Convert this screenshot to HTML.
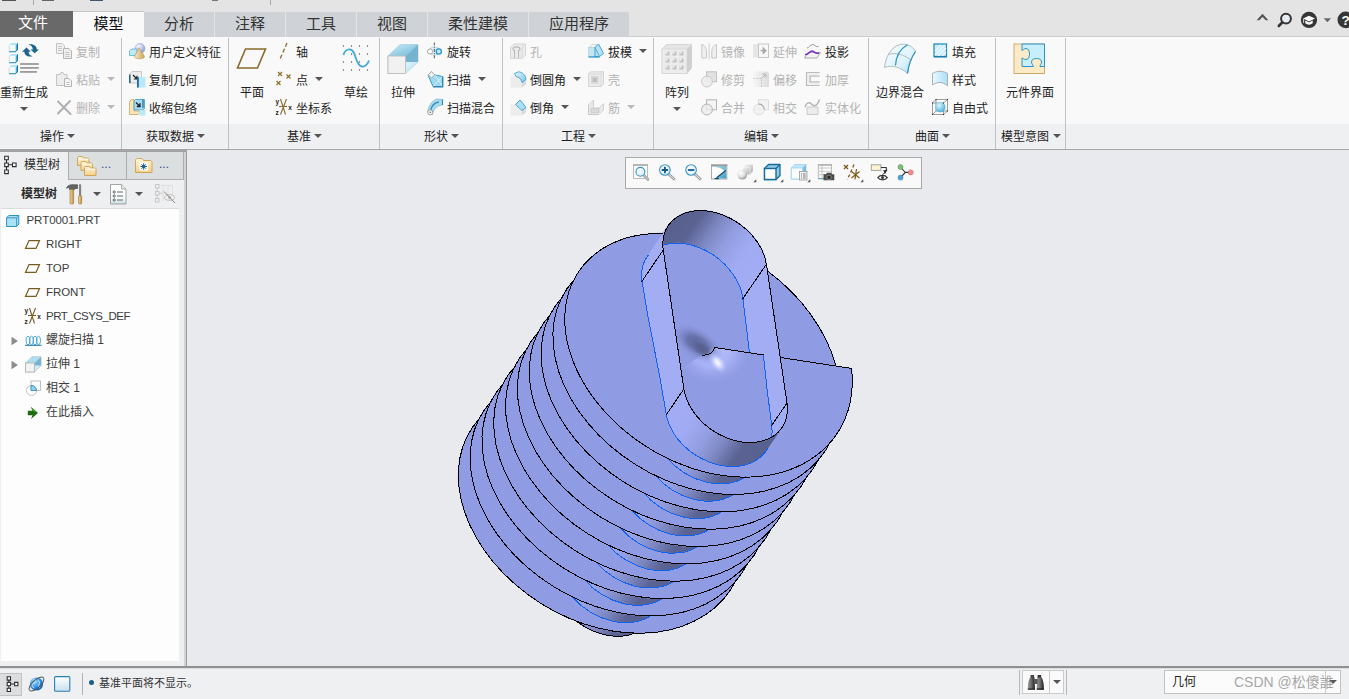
<!DOCTYPE html>
<html lang="zh-CN"><head><meta charset="utf-8"><title>Creo Parametric</title>
<style>
html,body{margin:0;padding:0}
body{width:1349px;height:699px;overflow:hidden;position:relative;background:#e9eaee;font-family:"Liberation Sans","Noto Sans CJK SC",sans-serif;font-size:12px;color:#1e1e1e}
.a{position:absolute}
.t{position:absolute;line-height:18px;white-space:nowrap;font-size:12px}
.d{color:#b3b3b3}
.ar{position:absolute;width:0;height:0;border-left:4px solid transparent;border-right:4px solid transparent;border-top:4px solid #555}
.ar.d{border-top-color:#b8b8b8}
.sep{position:absolute;top:38px;width:1px;height:111px;background:#bfc2c4}
.tab{position:absolute;top:12px;height:25px;background:#cfd3d7;font-size:15px;line-height:24px;text-align:center;color:#333}
svg{position:absolute;overflow:visible}
</style></head><body>

<!-- ===== top strip ===== -->
<div class="a" id="topbar" style="left:0;top:0;width:1349px;height:37px;background:#e4e4e4"></div>
<div class="a" style="left:2px;top:0;width:14px;height:1px;background:#555"></div>
<div class="a" style="left:33px;top:0;width:1px;height:5px;background:#aaa"></div>
<div class="a" style="left:42px;top:0;width:12px;height:1px;background:#666"></div>
<div class="a" style="left:90px;top:0;width:13px;height:1px;background:#456"></div>
<div class="a" style="left:212px;top:0;width:6px;height:1px;background:#777"></div>
<div class="a" style="left:270px;top:0;width:1px;height:5px;background:#aaa"></div>

<div class="a" style="left:629px;top:36px;width:720px;height:1px;background:#c8ced2"></div>
<!-- ===== tabs ===== -->
<div class="tab" style="left:0;width:73px;top:11px;height:26px;background:#696969;color:#fff;line-height:23px;padding-right:7px;box-sizing:border-box">文件</div>
<div class="tab" style="left:73px;width:71px;top:11px;height:27px;background:#f9f9f9;color:#111;border-top:1px solid #c4c4c4;box-sizing:border-box">模型</div>
<div class="tab" style="left:144px;width:70px">分析</div>
<div class="tab" style="left:215px;width:70px">注释</div>
<div class="tab" style="left:286px;width:70px">工具</div>
<div class="tab" style="left:357px;width:70px">视图</div>
<div class="tab" style="left:428px;width:100px">柔性建模</div>
<div class="tab" style="left:529px;width:100px">应用程序</div>

<!-- ===== ribbon ===== -->
<div class="a" id="ribbon" style="left:0;top:37px;width:1349px;height:87px;background:#f9f9f9"></div>
<div class="a" id="grouprow" style="left:0;top:124px;width:1349px;height:24px;background:#eff0f2"></div>
<div class="a" style="left:0;top:148px;width:1349px;height:1px;background:#f4f4f4"></div>
<div class="a" style="left:0;top:149px;width:1349px;height:1px;background:#a3a3a3"></div>

<!-- separators -->
<div class="sep" style="left:121px"></div><div class="sep" style="left:228px"></div><div class="sep" style="left:379px"></div>
<div class="sep" style="left:502px"></div><div class="sep" style="left:653px"></div><div class="sep" style="left:868px"></div>
<div class="sep" style="left:995px"></div><div class="sep" style="left:1065px"></div>

<!-- group labels -->
<span class="t" style="left:40px;top:128px">操作</span><i class="ar" style="left:67px;top:134px"></i>
<span class="t" style="left:146px;top:128px">获取数据</span><i class="ar" style="left:197px;top:134px"></i>
<span class="t" style="left:287px;top:128px">基准</span><i class="ar" style="left:314px;top:134px"></i>
<span class="t" style="left:424px;top:128px">形状</span><i class="ar" style="left:451px;top:134px"></i>
<span class="t" style="left:561px;top:128px">工程</span><i class="ar" style="left:588px;top:134px"></i>
<span class="t" style="left:744px;top:128px">编辑</span><i class="ar" style="left:771px;top:134px"></i>
<span class="t" style="left:915px;top:128px">曲面</span><i class="ar" style="left:942px;top:134px"></i>
<span class="t" style="left:1001px;top:128px">模型意图</span><i class="ar" style="left:1053px;top:134px"></i>

<!-- ===== group 1: 操作 ===== -->
<svg style="left:8px;top:42px" width="34" height="34" viewBox="0 0 34 34">
 <defs><g id="cb"><path d="M1 3.3L3.2 1H10L7.7 3.3Z" fill="#b4e6f9"/><rect x="1" y="3.3" width="6.7" height="6.3" fill="#effbff"/><path d="M7.7 3.3L10 1V7.6L7.7 10Z" fill="#55a9d3"/><path d="M9.5 1.5V7.6L7.7 9.6" stroke="#1a76ab" stroke-width="1" fill="none"/><path d="M1 9.7H7.9" stroke="#2b8dc3" stroke-width="1.1"/><path d="M1.2 3.3V9.3" stroke="#cfc6c0" stroke-width=".6"/></g></defs>
 <use href="#cb"/><use href="#cb" y="11"/><use href="#cb" y="22"/>
 <g fill="#9b9b9b"><rect x="12" y="21.1" width="18.8" height="1.8"/><rect x="12" y="25" width="18.8" height="1.8"/><rect x="12" y="29" width="17" height="1.8"/></g>
 <g fill="#1c668e">
  <path d="M18.5 5.4L22.8 9.8H20.6C20.6 12 22.2 13.8 24.6 14.2C20 15.6 16.2 13 16.4 9.8H14Z"/>
  <path d="M26.7 11.2L22.4 7.4H24.8C24.8 5.2 23 3.2 20.4 2.6C25 1.2 29 4 28.8 7.4H31Z"/>
 </g>
</svg>
<span class="t" style="left:0;top:84px">重新生成</span><i class="ar" style="left:20px;top:107px"></i>

<svg style="left:56px;top:43px" width="17" height="17" viewBox="0 0 17 17"><g fill="#f1f1f1" stroke="#c3c3c3"><path d="M0.5 0.5H6L8.5 3V10.5H0.5Z"/><path d="M7.5 5.5H13L15.5 8V15.5H7.5Z" fill="#eee" stroke="#b5b5b5"/></g><path d="M2 3.5H6M2 5.5H6M2 7.5H6M9.5 9.5H13.5M9.5 11.5H13.5M9.5 13.5H13.5" stroke="#c6c6c6" fill="none"/></svg>
<span class="t d" style="left:76px;top:44px">复制</span>
<svg style="left:56px;top:71px" width="17" height="17" viewBox="0 0 17 17"><path d="M0.5 3.5H4L5 1.5H7L8 3.5H11V14.5H0.5Z" fill="#ececec" stroke="#c3c3c3"/><path d="M8.5 7.5H13L15.5 10V15.5H8.5Z" fill="#f3f3f3" stroke="#b5b5b5"/><path d="M10.5 11.5H13.5M10.5 13.5H13.5" stroke="#c0c0c0"/></svg>
<span class="t d" style="left:76px;top:72px">粘贴</span><i class="ar d" style="left:107px;top:77px"></i>
<svg style="left:57px;top:100px" width="15" height="15" viewBox="0 0 15 15"><path d="M1 1.5L13.5 14M13 1L1 13.5" stroke="#b0b0b0" stroke-width="2" fill="none" stroke-linecap="round"/></svg>
<span class="t d" style="left:76px;top:100px">删除</span><i class="ar d" style="left:107px;top:105px"></i>

<!-- ===== group 2: 获取数据 ===== -->
<svg style="left:129px;top:43px" width="17" height="17" viewBox="0 0 17 17">
 <defs><radialGradient id="gsph" cx="35%" cy="30%" r="70%"><stop offset="0" stop-color="#fff"/><stop offset="1" stop-color="#8c9be0"/></radialGradient>
 <linearGradient id="gcone" x1="0" x2="1"><stop offset="0" stop-color="#fbe9c2"/><stop offset="1" stop-color="#c9a45c"/></linearGradient></defs>
 <circle cx="11" cy="5.5" r="5" fill="url(#gsph)" stroke="#98a4df" stroke-width=".6"/>
 <path d="M0.5 8L2.5 6H8V12.5H0.5Z" fill="#bfe8f7" stroke="#58b0d6" stroke-width=".8"/>
 <path d="M10 4.5L15.5 13.5C15.5 16.5 5.5 16.5 5.5 13.5Z" fill="url(#gcone)" stroke="#b08f4f" stroke-width=".6"/>
</svg>
<span class="t" style="left:149px;top:44px">用户定义特征</span>
<svg style="left:129px;top:71px" width="17" height="17" viewBox="0 0 17 17">
 <path d="M0.5 3.5L3 0.5H12.5V9L10 12H0.5Z" fill="#ededed" stroke="#bdbdbd" stroke-width=".8"/>
 <rect x="0" y="3.5" width="1.6" height="8.5" fill="#2b6585"/>
 <path d="M4 4L8 8M8 4.8V8H4.8" stroke="#222" stroke-width="1.2" fill="none"/>
 <rect x="8.5" y="6" width="8" height="10.5" fill="#b9e8fa"/><rect x="8" y="6" width="1.8" height="10.5" fill="#1d6c96"/>
</svg>
<span class="t" style="left:149px;top:72px">复制几何</span>
<svg style="left:129px;top:99px" width="17" height="17" viewBox="0 0 17 17">
 <path d="M0.5 3L2.5 0.5H5V12H11V13.5L9 15.5H0.5Z" fill="#fbe6b8" stroke="#c9a55e" stroke-width=".8"/>
 <path d="M5 2L6.5 0.5H15.5V9.5L14 11H5Z" fill="#a7dcf2" stroke="#3e9bc6" stroke-width=".8"/>
 <path d="M7 3.5L11 7.5M11 4.3V7.5H7.8" stroke="#222" stroke-width="1.3" fill="none"/>
 <rect x="10.5" y="11" width="6" height="5.5" fill="#b9e8fa"/><path d="M14 0.5V9" stroke="#1d6c96" stroke-width="1.2"/>
</svg>
<span class="t" style="left:149px;top:100px">收缩包络</span>

<!-- ===== group 3: 基准 ===== -->
<svg style="left:234px;top:46px" width="36" height="26" viewBox="0 0 36 26"><path d="M11.5 3H31.5L23.5 22H3.5Z" fill="none" stroke="#8a6a2a" stroke-width="1.6"/></svg>
<span class="t" style="left:240px;top:84px">平面</span>
<svg style="left:276px;top:42px" width="16" height="18" viewBox="0 0 16 18"><path d="M11 1L4 17" stroke="#8a6a2a" stroke-width="1.3" stroke-dasharray="4 2.4" fill="none"/></svg>
<span class="t" style="left:296px;top:44px">轴</span>
<svg style="left:275px;top:71px" width="18" height="16" viewBox="0 0 18 16"><path d="M3 1L7 5M7 1L3 5M11.5 3.5L15.5 7.5M15.5 3.5L11.5 7.5M1.5 10L5.5 14M5.5 10L1.5 14" stroke="#8a6a2a" stroke-width="1.1" fill="none"/></svg>
<span class="t" style="left:296px;top:72px">点</span><i class="ar" style="left:315px;top:77px"></i>
<svg style="left:275px;top:98px" width="18" height="18" viewBox="0 0 18 18"><path d="M5.5 1L10.5 16.5M11.5 1L5.5 16.5M4 8.5H12" stroke="#8a6a2a" stroke-width="1.1" fill="none"/>
 <text x="0.5" y="6" font-size="6.5" font-family="Liberation Sans,sans-serif" fill="#222" font-weight="bold">y</text><text x="0.5" y="17" font-size="6.5" font-family="Liberation Sans,sans-serif" fill="#222" font-weight="bold">z</text><text x="13.3" y="11.5" font-size="6.5" font-family="Liberation Sans,sans-serif" fill="#222" font-weight="bold">x</text></svg>
<span class="t" style="left:296px;top:100px">坐标系</span>
<svg style="left:342px;top:44px" width="29" height="29" viewBox="0 0 29 29">
 <g fill="#555"><circle cx="1.5" cy="2" r=".7"/><circle cx="9.5" cy="2" r=".7"/><circle cx="17.5" cy="2" r=".7"/><circle cx="25.5" cy="2" r=".7"/>
 <circle cx="9.5" cy="10" r=".7"/><circle cx="17.5" cy="10" r=".7"/><circle cx="25.5" cy="10" r=".7"/>
 <circle cx="1.5" cy="18" r=".7"/><circle cx="9.5" cy="18" r=".7"/><circle cx="17.5" cy="18" r=".7"/>
 <circle cx="1.5" cy="26" r=".7"/><circle cx="9.5" cy="26" r=".7"/><circle cx="17.5" cy="26" r=".7"/><circle cx="25.5" cy="26" r=".7"/></g>
 <path d="M1.5 11C3 5 9 3 12 9C14 13 15 22 20 22.5C24 23 26 19 27 16.5" fill="none" stroke="#3fa9d8" stroke-width="1.8"/>
</svg>
<span class="t" style="left:344px;top:84px">草绘</span>

<!-- ===== group 4: 形状 ===== -->
<svg style="left:387px;top:43px" width="32" height="32" viewBox="0 0 32 32">
 <defs><linearGradient id="gx1" x1="0" y1="0" x2="1" y2="1"><stop offset="0" stop-color="#c9eefb"/><stop offset="1" stop-color="#6fb6d6"/></linearGradient>
 <linearGradient id="gx2" x1="0" y1="0" x2="1" y2="1"><stop offset="0" stop-color="#e3f6fd"/><stop offset="1" stop-color="#a5dcf2"/></linearGradient></defs>
 <path d="M1 13L13 1.5H31V19L18.5 30.5H1Z" fill="url(#gx2)" stroke="#b9c6cc" stroke-width=".8"/>
 <path d="M1 13L13 1.5H31L18.5 13Z" fill="url(#gx1)"/>
 <path d="M18.5 13L31 1.5V19H18.5Z" fill="#76b3d0"/>
 <path d="M18.5 19H31L18.5 30.5Z" fill="url(#gx2)"/>
 <rect x="1" y="13" width="17.5" height="17.5" fill="#f1f1f1" stroke="#bdbdbd" stroke-width=".9"/>
</svg>
<span class="t" style="left:391px;top:84px">拉伸</span>
<svg style="left:426px;top:42px" width="18" height="18" viewBox="0 0 18 18">
 <path d="M4 6.5C6 4.5 11 4.5 13 6.5V12C11 13.5 6 13.5 4 12Z" fill="#d5eef9" stroke="#aac4d0" stroke-width=".6"/>
 <circle cx="4" cy="9.5" r="2.6" fill="#fff" stroke="#aaa" stroke-width="1"/>
 <circle cx="12.8" cy="9.5" r="2.6" fill="#bfe8f8" stroke="#2d94c4" stroke-width="1.3"/>
 <path d="M8.3 0.5V17" stroke="#555" stroke-width="1" stroke-dasharray="3 1.2 1 1.2" fill="none"/>
</svg>
<span class="t" style="left:447px;top:44px">旋转</span>
<svg style="left:427px;top:71px" width="17" height="17" viewBox="0 0 17 17">
 <path d="M1 4L4.5 0.8L8 4L15.5 5.5V15.5H6Z" fill="#9fd8ef" stroke="#3a9bc7" stroke-width="1"/>
 <path d="M8 4L15.5 15.5M6 15.5L15.5 5.5" stroke="#d8f2fc" stroke-width=".9" fill="none"/>
 <path d="M1 4L4.5 0.8L8 4L4.5 6.5Z" fill="#f4f4f4" stroke="#aaa" stroke-width=".8"/>
 <path d="M6 15.8H15.8V5.5" stroke="#2583b3" stroke-width="1.2" fill="none"/>
</svg>
<span class="t" style="left:447px;top:72px">扫描</span><i class="ar" style="left:478px;top:77px"></i>
<svg style="left:427px;top:98px" width="17" height="18" viewBox="0 0 17 18">
 <path d="M0.8 14C1.5 7 6 2 10 1L15.5 1.5V7C10 7.5 6.5 10.5 5.5 16.5Z" fill="#a9dcf1" stroke="#7fb3cb" stroke-width=".7"/>
 <path d="M3.5 13C4.5 8 8 4.5 12 4" stroke="#2e8dbb" stroke-width="1.3" fill="none"/>
 <path d="M15.5 1.5V7" stroke="#2e8dbb" stroke-width="1.2"/>
 <circle cx="3.2" cy="14.3" r="2.6" fill="#f6f6f6" stroke="#999" stroke-width=".9"/><circle cx="3.2" cy="14.3" r=".7" fill="#444"/>
</svg>
<span class="t" style="left:447px;top:100px">扫描混合</span>

<!-- ===== group 5: 工程 ===== -->
<svg style="left:510px;top:43px" width="17" height="17" viewBox="0 0 17 17">
 <path d="M0.5 4.5L4 1H15.5V12L12 15.5H0.5Z" fill="#ececec" stroke="#cfcfcf" stroke-width=".8"/>
 <path d="M12 4.5V15.5M12 4.5L15.5 1" stroke="#d2d2d2" stroke-width=".8" fill="none"/>
 <path d="M3 6.5C3 3 10 3 10 6.5M4.5 7V15M8.5 7V15M3 6.5L4.5 8M10 6.5L8.5 8" stroke="#b9b9b9" stroke-width="1.1" fill="none"/>
</svg>
<span class="t d" style="left:530px;top:44px">孔</span>
<svg style="left:510px;top:71px" width="17" height="17" viewBox="0 0 17 17">
 <defs><linearGradient id="gfl" x1="0" y1="0" x2="1" y2="1"><stop offset="0" stop-color="#e8f8fe"/><stop offset="1" stop-color="#79c6e8"/></linearGradient></defs>
 <path d="M0.5 5.5H6C9 6 11.5 8 12 11.5V16.5H0.5Z" fill="#ececec"/>
 <path d="M12 11.5L16 8.5V13L12 16.5Z" fill="#d9d9d9"/>
 <path d="M4.5 2.5L8.5 0.8C12.5 1.2 15.5 4 16 8.5L12 11.5C11.5 8 9 6 6 5.5Z" fill="url(#gfl)" stroke="#3e9fcd" stroke-width=".9"/>
</svg>
<span class="t" style="left:530px;top:72px">倒圆角</span><i class="ar" style="left:573px;top:77px"></i>
<svg style="left:510px;top:99px" width="17" height="17" viewBox="0 0 17 17">
 <path d="M0.5 5.5H5.5L12 11.5V16.5H0.5Z" fill="#ececec"/>
 <path d="M12 11.5L16 8.5V13L12 16.5Z" fill="#d9d9d9"/>
 <path d="M5.5 5.5L10 1L16 8.5L12 11.5Z" fill="#aadff5" stroke="#3e9fcd" stroke-width=".9"/>
</svg>
<span class="t" style="left:530px;top:100px">倒角</span><i class="ar" style="left:561px;top:105px"></i>
<svg style="left:588px;top:43px" width="17" height="17" viewBox="0 0 17 17">
 <path d="M0.5 4.5L4 1.5H9L7 4.5Z" fill="#f4f4f4" stroke="#c4c4c4" stroke-width=".6"/>
 <path d="M0.5 4.5H7V13.5H0.5Z" fill="#c4e4f1" stroke="#a5cfe0" stroke-width=".6"/>
 <path d="M7 4.5L10.5 1L15.5 10.5L11.5 13.5H7Z" fill="#b5e3f6" stroke="#3d9dca" stroke-width=".9"/>
 <path d="M7 4.5L11.5 13.5" stroke="#3d9dca" stroke-width=".8"/>
 <path d="M0.5 14H11.5" stroke="#2f97c9" stroke-width="1.3"/>
</svg>
<span class="t" style="left:608px;top:44px">拔模</span><i class="ar" style="left:639px;top:49px"></i>
<svg style="left:588px;top:71px" width="17" height="17" viewBox="0 0 17 17">
 <path d="M0.5 3L2.5 0.8H15.5V13L13 15.5H0.5Z" fill="#ebebeb" stroke="#cdcdcd" stroke-width=".8"/>
 <path d="M13 3V15.5M0.5 3H13L15.5 0.8" stroke="#d2d2d2" stroke-width=".7" fill="none"/>
 <rect x="3" y="5" width="7.5" height="7.5" fill="#d6d6d6"/><rect x="4.8" y="6.8" width="4" height="4" fill="#bdbdbd"/>
</svg>
<span class="t d" style="left:608px;top:72px">壳</span>
<svg style="left:588px;top:99px" width="17" height="17" viewBox="0 0 17 17">
 <path d="M0.5 6L5.5 1V9H11L15.5 4.5V11L11 15.5H0.5Z" fill="#e9e9e9" stroke="#c9c9c9" stroke-width=".8"/>
 <path d="M3 9.5H11V13.5H3Z" fill="#dadada" stroke="#c0c0c0" stroke-width=".6"/>
 <path d="M0.5 6V15.5H11" stroke="#bbb" stroke-width=".8" stroke-dasharray="1 1" fill="none"/>
</svg>
<span class="t d" style="left:608px;top:100px">筋</span><i class="ar d" style="left:627px;top:105px"></i>

<!-- ===== group 6: 编辑 ===== -->
<svg style="left:661px;top:43px" width="32" height="32" viewBox="0 0 32 32">
 <path d="M1 6L5.5 1.5H30.5V25L26 30.5H1Z" fill="#e4e4e4" stroke="#cfcfcf" stroke-width=".8"/>
 <path d="M26 6L30.5 1.5V25L26 30.5Z" fill="#cfcfcf"/>
 <rect x="1" y="6" width="25" height="24.5" fill="#ececec" stroke="#d2d2d2" stroke-width=".6"/>
 <g fill="#c2c2c2"><rect x="4.5" y="8.5" width="4" height="4"/><rect x="11.5" y="8.5" width="4" height="4"/><rect x="18.5" y="8.5" width="4" height="4"/>
 <rect x="4.5" y="15.5" width="4" height="4"/><rect x="11.5" y="15.5" width="4" height="4"/><rect x="18.5" y="15.5" width="4" height="4"/>
 <rect x="4.5" y="22.5" width="4" height="4"/><rect x="11.5" y="22.5" width="4" height="4"/><rect x="18.5" y="22.5" width="4" height="4"/></g>
 <g fill="#f5f5f5"><rect x="4.5" y="8.5" width="2" height="2"/><rect x="11.5" y="8.5" width="2" height="2"/><rect x="18.5" y="8.5" width="2" height="2"/>
 <rect x="4.5" y="15.5" width="2" height="2"/><rect x="11.5" y="15.5" width="2" height="2"/><rect x="18.5" y="15.5" width="2" height="2"/>
 <rect x="4.5" y="22.5" width="2" height="2"/><rect x="11.5" y="22.5" width="2" height="2"/><rect x="18.5" y="22.5" width="2" height="2"/></g>
</svg>
<span class="t" style="left:665px;top:84px">阵列</span><i class="ar" style="left:673px;top:107px"></i>

<svg style="left:701px;top:43px" width="17" height="17" viewBox="0 0 17 17">
 <path d="M0.8 1.5C4.5 2.5 5.5 6 5.5 8.5V15H0.8Z" fill="#efefef" stroke="#c2c2c2" stroke-width=".9"/>
 <path d="M15.5 1.5C11.8 2.5 10.8 6 10.8 8.5V15H15.5Z" fill="#efefef" stroke="#c2c2c2" stroke-width=".9"/>
 <path d="M8.1 0.5V16.5" stroke="#c8c8c8" stroke-width=".9"/>
</svg>
<span class="t d" style="left:721px;top:44px">镜像</span>
<svg style="left:701px;top:71px" width="17" height="17" viewBox="0 0 17 17">
 <rect x="5.5" y="0.8" width="10" height="10" fill="#e2e2e2" stroke="#bdbdbd" stroke-width=".9"/>
 <circle cx="6" cy="10.5" r="5.4" fill="#ededed" fill-opacity=".85" stroke="#c3c3c3" stroke-width=".9"/>
</svg>
<span class="t d" style="left:721px;top:72px">修剪</span>
<svg style="left:701px;top:99px" width="17" height="17" viewBox="0 0 17 17">
 <rect x="5.5" y="0.8" width="10" height="10" fill="#f4f4f4" stroke="#b5b5b5" stroke-width="1"/>
 <circle cx="6" cy="10.5" r="5.4" fill="#ececec" fill-opacity=".8" stroke="#b5b5b5" stroke-width="1"/>
</svg>
<span class="t d" style="left:721px;top:100px">合并</span>

<svg style="left:753px;top:43px" width="17" height="17" viewBox="0 0 17 17">
 <rect x="0" y="1" width="5.5" height="13.5" fill="#e6e6e6"/>
 <rect x="5.5" y="1" width="10" height="13.5" fill="#f8f8f8" stroke="#c0c0c0" stroke-width=".9"/>
 <path d="M7.5 7.7H12M10.2 5L13 7.7L10.2 10.4Z" stroke="#a9a9a9" stroke-width="1.2" fill="#a9a9a9"/>
</svg>
<span class="t d" style="left:773px;top:44px">延伸</span>
<svg style="left:753px;top:71px" width="17" height="17" viewBox="0 0 17 17">
 <defs><linearGradient id="gof" x1="0" x2="1"><stop offset="0" stop-color="#f7f7f7"/><stop offset="1" stop-color="#dcdcdc"/></linearGradient></defs>
 <path d="M0 0.5H13C15 0.5 16 1.5 16 3.5V16H0Z" fill="url(#gof)"/>
 <path d="M0.5 7.5H8.5V16" stroke="#bdbdbd" stroke-width=".9" stroke-dasharray="1.5 1.5" fill="none"/>
 <path d="M8.5 7.5L12.5 3.5M9.5 3.2H12.8V6.5" stroke="#b4b4b4" stroke-width="1" fill="none"/>
</svg>
<span class="t d" style="left:773px;top:72px">偏移</span>
<svg style="left:753px;top:99px" width="17" height="17" viewBox="0 0 17 17">
 <rect x="5.5" y="0.8" width="10" height="10" fill="#f3f3f3" stroke="#d6d6d6" stroke-width=".8"/>
 <circle cx="6" cy="10.5" r="5.4" fill="#f0f0f0" fill-opacity=".8" stroke="#dadada" stroke-width=".8"/>
 <path d="M5.5 5.2C8.5 4.8 11 7 11.3 10.5" stroke="#a8a8a8" stroke-width="1.2" fill="none"/>
</svg>
<span class="t d" style="left:773px;top:100px">相交</span>

<svg style="left:804px;top:43px" width="18" height="17" viewBox="0 0 18 17">
 <path d="M3 5C5 5 6 1.5 8.5 1.5C11 1.5 11.5 4.5 14.5 3.5" stroke="#999" stroke-width="1" fill="none"/>
 <path d="M4 9.5H16.5L13 15H0.5Z" fill="#f2f2f2" stroke="#9a9a9a" stroke-width=".8"/>
 <path d="M1 11.5C3.5 12.5 5.5 8 8 8C10.5 8 11 11.5 15 10" stroke="#7b2fbe" stroke-width="1.5" fill="none"/>
</svg>
<span class="t" style="left:825px;top:44px">投影</span>
<svg style="left:805px;top:71px" width="16" height="17" viewBox="0 0 16 17">
 <path d="M14.5 1.5H1.5V14.5H14.5M14.5 5H5V11H14.5" fill="none" stroke="#bcbcbc" stroke-width="1.1"/>
 <path d="M14.5 1.5H1.5V14.5H14.5V11H5V5H14.5Z" fill="#efefef"/>
 <path d="M14.5 1.5H1.5V14.5H14.5M14.5 5H5V11H14.5" fill="none" stroke="#bcbcbc" stroke-width="1.1"/>
</svg>
<span class="t d" style="left:825px;top:72px">加厚</span>
<svg style="left:804px;top:98px" width="18" height="18" viewBox="0 0 18 18">
 <path d="M3 9H14V16.5H3Z" fill="#ececec" stroke="#c6c6c6" stroke-width=".9"/>
 <path d="M1 9C2 5 5 3.5 7.5 6C9.5 8.5 13 9 15.5 1.5" stroke="#b3b3b3" stroke-width="1.5" fill="none"/>
</svg>
<span class="t d" style="left:825px;top:100px">实体化</span>

<!-- ===== group 7: 曲面 ===== -->
<svg style="left:883px;top:43px" width="34" height="32" viewBox="0 0 34 32">
 <defs><linearGradient id="gbb" x1="0" y1="0" x2="1" y2="1"><stop offset="0" stop-color="#f4fcff"/><stop offset=".6" stop-color="#dff4fc"/><stop offset="1" stop-color="#9fdaf1"/></linearGradient></defs>
 <path d="M1.5 24.5C2.5 14 8 4 17 1.5C23 0.5 29 2 32.5 8.5C28 15 25.5 22 24.5 30.5C18 24.5 9 21.5 1.5 24.5Z" fill="url(#gbb)" stroke="#a9b6bc" stroke-width=".9"/>
 <path d="M5 11.5C13 9 22 12 28.5 17.5" stroke="#a9b6bc" stroke-width=".9" fill="none"/>
 <path d="M12.5 22.5C13 13 17 6 24.5 1.8" stroke="#2d8fbd" stroke-width="1.2" fill="none"/>
 <path d="M32.5 8.5C28 15 25.5 22 24.5 30.5" stroke="#2d8fbd" stroke-width="1.2" fill="none"/>
</svg>
<span class="t" style="left:876px;top:84px">边界混合</span>
<svg style="left:933px;top:43px" width="15" height="15" viewBox="0 0 15 15">
 <rect x="1" y="1" width="12.5" height="12.5" fill="#c5ecfa" stroke="#2a8cbd" stroke-width="1.3"/>
 <path d="M2 8L8 2M2 12L12 2M5 13L13 5M9 13L13 9" stroke="#eefaff" stroke-width="1.2"/>
 <path d="M1 13.8H13.8" stroke="#1d7db0" stroke-width="1.4"/>
</svg>
<span class="t" style="left:952px;top:44px">填充</span>
<svg style="left:931px;top:70px" width="18" height="18" viewBox="0 0 18 18">
 <defs><linearGradient id="gst" x1="0" x2="1"><stop offset="0" stop-color="#e9f9ff"/><stop offset="1" stop-color="#a9e0f5"/></linearGradient></defs>
 <path d="M1.5 3.5C6 0.5 12 0.5 16.5 3.5V16C12 11.5 6 11.5 1.5 15Z" fill="url(#gst)" stroke="#a8a8a8" stroke-width=".9"/>
</svg>
<span class="t" style="left:952px;top:72px">样式</span>
<svg style="left:931px;top:98px" width="18" height="18" viewBox="0 0 18 18">
 <defs><radialGradient id="gbl" cx="40%" cy="35%" r="65%"><stop offset="0" stop-color="#dff5fd"/><stop offset="1" stop-color="#4fb0da"/></radialGradient></defs>
 <path d="M1.5 5L5 1.5H16.5V13L12.5 16.5H1.5Z M1.5 5H12.5V16.5M12.5 5L16.5 1.5M5 1.5V13H16.5M5 13L1.5 16.5" fill="none" stroke="#777" stroke-width=".7"/>
 <circle cx="9.3" cy="9" r="5.2" fill="url(#gbl)"/>
 <g fill="#222"><rect x="1" y="4.5" width="1" height="1"/><rect x="12" y="4.5" width="1" height="1"/><rect x="1" y="16" width="1" height="1"/><rect x="12" y="16" width="1" height="1"/><rect x="16" y="1" width="1" height="1"/><rect x="4.5" y="1" width="1" height="1"/><rect x="16" y="12.5" width="1" height="1"/></g>
</svg>
<span class="t" style="left:952px;top:100px">自由式</span>

<!-- ===== group 8: 模型意图 ===== -->
<svg style="left:1013px;top:43px" width="33" height="32" viewBox="0 0 33 32">
 <rect x="1" y="1" width="30.5" height="29.5" fill="#fdebc8" stroke="#c9a45f" stroke-width=".9"/>
 <path d="M9 1H31.5V23.5H27C27 22 28.5 21 28.5 19C28.5 16.5 26 15.5 23.5 15.5C21 15.5 18.5 16.5 18.5 19C18.5 21 20.5 22 20.5 23.5H9V15C10 15 11 16.5 13 16.5C15.5 16.5 16.5 13.5 16.5 11C16.5 8.5 15.5 5.5 13 5.5C11 5.5 10 7.5 9 7.5Z" fill="#c6eefc" stroke="#2e93c4" stroke-width="1"/>
</svg>
<span class="t" style="left:1006px;top:84px">元件界面</span>

<!-- top-right icons -->
<svg style="left:1255px;top:11px" width="94" height="18" viewBox="0 0 94 18">
 <path d="M1.6 9.2L7.5 2.8L13.4 9.2H10.6L7.5 6L4.4 9.2Z" fill="#555"/>
 <circle cx="31" cy="7.6" r="4.9" fill="#e6eef3" stroke="#333" stroke-width="2"/><path d="M27.3 11.3L23.8 15" stroke="#333" stroke-width="2.6" stroke-linecap="round"/>
 <circle cx="54" cy="8.9" r="8.1" fill="#363636"/><path d="M48 7.6L54 4.8L60 7.6L54 10.4Z" fill="#fff"/><path d="M50.3 9.6V12.3C52.5 14.2 55.5 14.2 57.7 12.3V9.6L54 11.4Z" fill="#fff"/><path d="M48.6 8V12" stroke="#fff" stroke-width=".8"/>
 <path d="M68.7 7.2H76.1L72.4 11.3Z" fill="#666"/>
 <circle cx="90.8" cy="8.9" r="8.3" fill="#363636"/><text x="86.6" y="14" font-size="13.5" font-weight="bold" fill="#fff" font-family="Liberation Sans,sans-serif">?</text>
</svg>


<!-- ===== left panel ===== -->
<div class="a" style="left:0;top:150px;width:184px;height:516px;background:#eeeff1"></div>
<div class="a" style="left:0;top:150px;width:187px;height:2px;background:#a3a3a3"></div>
<div class="a" style="left:1px;top:208px;width:178px;height:452px;background:#fdfdfd;border-top:1px solid #dcdcdc"></div>
<div class="a" style="left:184px;top:152px;width:2px;height:514px;background:#d3d4d6"></div>
<div class="a" style="left:186px;top:152px;width:1px;height:514px;background:#9c9c9c"></div>
<!-- tabs -->
<div class="a" style="left:68px;top:152px;width:116px;height:28px;background:#dcdfe0;border:1px solid #adadad;border-top:none;box-sizing:border-box"></div>
<div class="a" style="left:126px;top:152px;width:1px;height:27px;background:#adadad"></div>
<svg style="left:4px;top:155px" width="14" height="20" viewBox="0 0 14 20"><path d="M0.7 1.2h3.6v3.6h-3.6zM0.7 8h3.6v3.6h-3.6zM0.7 15h3.6v3.6h-3.6zM8.5 8h3.6v3.6h-3.6z" fill="#fff" stroke="#2e2e2e" stroke-width="1.1"/><path d="M2.5 4.8V8M2.5 11.6V15M4.3 9.8H8.5" fill="none" stroke="#2e2e2e" stroke-width="1.1"/></svg>
<span class="t" style="left:24px;top:156px;color:#2b2b2b">模型树</span>
<svg style="left:77px;top:156px" width="20" height="20" viewBox="0 0 20 20">
 <defs><linearGradient id="gfo" x1="0" y1="0" x2="0" y2="1"><stop offset="0" stop-color="#fff6de"/><stop offset="1" stop-color="#f3cf86"/></linearGradient>
 <g id="fo"><path d="M0.5 2C0.5 1 1 0.5 2 0.5H5.5L6.5 2H10.5C11.5 2 12 2.5 12 3.5V9.5H0.5Z" fill="url(#gfo)" stroke="#c9a052" stroke-width=".9"/><path d="M1 3.2H11.5" stroke="#fffaf0" stroke-width=".8"/></g></defs>
 <use href="#fo"/><use href="#fo" x="3.5" y="5"/><use href="#fo" x="7" y="10"/>
</svg>
<span class="t" style="left:101px;top:155px;color:#3a4a8a;letter-spacing:0">...</span>
<svg style="left:135px;top:158px" width="18" height="16" viewBox="0 0 18 16">
 <path d="M0.5 2.5C0.5 1.2 1.2 0.5 2.5 0.5H7L8.5 2.5H15C16.3 2.5 17 3.2 17 4.5V14.5H0.5Z" fill="url(#gfo)" stroke="#c9a052" stroke-width=".9"/>
 <rect x="4.5" y="4.5" width="8.5" height="8" fill="#fff"/>
 <path d="M8.7 5.2V11.8M5.4 8.5H12M6.4 6.2L11 10.8M11 6.2L6.4 10.8" stroke="#1c5d86" stroke-width="1"/><circle cx="8.7" cy="8.5" r="1.4" fill="#1c5d86"/>
</svg>
<span class="t" style="left:159px;top:155px;color:#3a4a8a">...</span>
<!-- toolbar -->
<span class="t" style="left:21px;top:185px;font-weight:bold;color:#2b2b2b">模型树</span>
<svg style="left:66px;top:184px" width="18" height="21" viewBox="0 0 18 21">
 <defs><linearGradient id="ghm" x1="0" x2="1"><stop offset="0" stop-color="#f0d9a0"/><stop offset="1" stop-color="#b98f42"/></linearGradient></defs>
 <path d="M0.8 3.5C2 1 5 0.3 8 0.8H11.5V4.5H8.5V5.5H3.5V3.5C2.5 3.2 1.5 3.6 0.8 4.5Z" fill="#666" stroke="#3a3a3a" stroke-width=".6"/>
 <rect x="4" y="5.5" width="3.6" height="14.5" rx="1" fill="url(#ghm)" stroke="#9a7433" stroke-width=".6"/>
 <rect x="13.3" y="0.8" width="1.6" height="11" fill="#8a8a8a" stroke="#555" stroke-width=".4"/>
 <rect x="12.5" y="11.5" width="3.2" height="8.5" rx="1" fill="url(#ghm)" stroke="#9a7433" stroke-width=".6"/>
</svg>
<i class="ar" style="left:93px;top:192px"></i>
<svg style="left:110px;top:184px" width="17" height="21" viewBox="0 0 17 21">
 <defs><linearGradient id="gdoc" x1="0" y1="0" x2="0" y2="1"><stop offset="0" stop-color="#fff"/><stop offset=".7" stop-color="#f4f8fa"/><stop offset="1" stop-color="#c7dde6"/></linearGradient></defs>
 <path d="M0.5 0.5H11.5L16 5V20H0.5Z" fill="url(#gdoc)" stroke="#9a9a9a" stroke-width=".9"/><path d="M11.5 0.5V5H16" fill="#e8e8e8" stroke="#9a9a9a" stroke-width=".8"/>
 <g fill="none" stroke="#555" stroke-width=".9"><circle cx="4.2" cy="8" r="1.1"/><circle cx="4.2" cy="12" r="1.1"/><circle cx="4.2" cy="16" r="1.1"/><path d="M7 8H13M7 12H13M7 16H13"/></g>
</svg>
<i class="ar" style="left:135px;top:192px"></i>
<svg style="left:155px;top:184px" width="21" height="21" viewBox="0 0 21 21">
 <g fill="none" stroke="#c4c4c4" stroke-width=".9"><rect x="0.5" y="0.5" width="3.5" height="3.5"/><rect x="0.5" y="7.5" width="3.5" height="3.5"/><rect x="0.5" y="14.5" width="3.5" height="3.5"/><path d="M2.2 4V7.5M2.2 11V14.5M4 9.2H8"/><path d="M8 1.5V17M13 1.5V10M17.5 1.5V10M6 1.5H18" stroke="#dcdcdc"/></g>
 <ellipse cx="14.5" cy="13.5" rx="5" ry="2.8" fill="#efefef" stroke="#b5b5b5" stroke-width=".9"/><circle cx="14.5" cy="13.5" r="1.4" fill="#b5b5b5"/>
 <path d="M9 7.5L20 19" stroke="#8a8a8a" stroke-width="1"/>
</svg>

<!-- tree rows -->
<style>.tr{position:absolute;line-height:18px;white-space:nowrap;font-size:12px;color:#3c3c3c;left:46px}.tr.en{font-size:11.5px;letter-spacing:-.05px}</style>
<svg style="left:6px;top:214px" width="14" height="14" viewBox="0 0 14 14"><path d="M0.6 3.8L2.8 1.5H12.8V10.2L10.6 12.5H0.6Z" fill="#a9e2f7" stroke="#2f8fc0" stroke-width="1"/><path d="M0.6 3.8H10.6V12.5M10.6 3.8L12.8 1.5" fill="none" stroke="#2f8fc0" stroke-width=".9"/></svg>
<span class="tr en" style="left:26.5px;top:211px">PRT0001.PRT</span>
<svg style="left:24px;top:239px" width="17" height="11" viewBox="0 0 17 11"><path d="M5 1.6H15.5L12 9.4H1.5Z" fill="none" stroke="#7a5c22" stroke-width="1.2"/></svg>
<span class="tr en" style="top:235px">RIGHT</span>
<svg style="left:24px;top:263px" width="17" height="11" viewBox="0 0 17 11"><path d="M5 1.6H15.5L12 9.4H1.5Z" fill="none" stroke="#7a5c22" stroke-width="1.2"/></svg>
<span class="tr en" style="top:259px">TOP</span>
<svg style="left:24px;top:287px" width="17" height="11" viewBox="0 0 17 11"><path d="M5 1.6H15.5L12 9.4H1.5Z" fill="none" stroke="#7a5c22" stroke-width="1.2"/></svg>
<span class="tr en" style="top:283px">FRONT</span>
<svg style="left:24px;top:307px" width="18" height="18" viewBox="0 0 18 18"><path d="M5.5 1L10.5 16.5M11.5 1L5.5 16.5M4 8.5H12" stroke="#7a5c22" stroke-width="1.1" fill="none"/>
 <text x="0.5" y="6" font-size="6.5" font-family="Liberation Sans,sans-serif" fill="#222" font-weight="bold">y</text><text x="0.5" y="17" font-size="6.5" font-family="Liberation Sans,sans-serif" fill="#222" font-weight="bold">z</text><text x="13.3" y="11.5" font-size="6.5" font-family="Liberation Sans,sans-serif" fill="#222" font-weight="bold">x</text></svg>
<span class="tr en" style="top:307px;letter-spacing:-.5px">PRT_CSYS_DEF</span>

<svg style="left:11px;top:336px" width="8" height="10" viewBox="0 0 8 10"><path d="M0.5 0.8L7 5L0.5 9.2Z" fill="#8c8c8c"/></svg>
<svg style="left:25px;top:335px" width="17" height="12" viewBox="0 0 17 12"><g fill="none" stroke="#3a9fd0" stroke-width=".9"><ellipse cx="3" cy="5.5" rx="2" ry="4.3"/><ellipse cx="6.5" cy="5.5" rx="2" ry="4.3"/><ellipse cx="10" cy="5.5" rx="2" ry="4.3"/><ellipse cx="13.5" cy="5.5" rx="2" ry="4.3"/></g><path d="M0 10.3H16.5" stroke="#1f6f9c" stroke-width="1"/></svg>
<span class="tr" style="top:331px">螺旋扫描 1</span>
<svg style="left:11px;top:360px" width="8" height="10" viewBox="0 0 8 10"><path d="M0.5 0.8L7 5L0.5 9.2Z" fill="#8c8c8c"/></svg>
<svg style="left:25px;top:356px" width="17" height="17" viewBox="0 0 17 17">
 <path d="M0.5 7L7 0.8H16V9.5L9.5 16H0.5Z" fill="#cfeefa" stroke="#a5b4ba" stroke-width=".7"/>
 <path d="M9.5 7L16 0.8V9.5H9.5Z" fill="#76b3d0"/><path d="M0.5 7L7 0.8H16L9.5 7Z" fill="#aedcf0"/>
 <rect x="0.5" y="7" width="9" height="9" fill="#f3f3f3" stroke="#b0b0b0" stroke-width=".8"/>
</svg>
<span class="tr" style="top:355px">拉伸 1</span>
<svg style="left:25px;top:380px" width="17" height="17" viewBox="0 0 17 17">
 <rect x="6" y="1" width="9.5" height="9.5" fill="#fcfcfc" stroke="#b9b9b9" stroke-width=".9"/>
 <circle cx="6.5" cy="10.5" r="5" fill="#fff" fill-opacity=".7" stroke="#bdbdbd" stroke-width=".9"/>
 <path d="M6 5.5C9 5.3 11.3 7.5 11.5 10.5H6Z" fill="#8fd3f0" stroke="#2d8fc0" stroke-width=".9"/>
</svg>
<span class="tr" style="top:379px">相交 1</span>
<svg style="left:27px;top:406px" width="12" height="14" viewBox="0 0 12 14"><path d="M0.8 4.8H5.5L4 1L11 7L4 13L5.5 9.2H0.8Z" fill="#1f6b12"/><path d="M5.5 4.8L4 1L11 7Z" fill="#3aa01f"/></svg>
<span class="tr" style="top:403px">在此插入</span>


<!-- ===== viewport ===== -->
<!--MODEL-START-->
<svg style="left:0;top:0" width="1349" height="699" viewBox="0 0 1349 699">
<defs>
<linearGradient id="gOut" gradientUnits="userSpaceOnUse" x1="704.2" y1="341.9" x2="797.2" y2="405.3"><stop offset="0.00" stop-color="#a3adf4"/><stop offset="0.30" stop-color="#a0abf3"/><stop offset="0.50" stop-color="#929de0"/><stop offset="0.65" stop-color="#7c87c1"/><stop offset="0.81" stop-color="#5b6393"/><stop offset="1.00" stop-color="#58608e"/></linearGradient>
<linearGradient id="gIn" gradientUnits="userSpaceOnUse" x1="625.5" y1="288.2" x2="718.5" y2="351.6"><stop offset="0.00" stop-color="#58608e"/><stop offset="0.19" stop-color="#5b6393"/><stop offset="0.35" stop-color="#7c87c1"/><stop offset="0.50" stop-color="#929de0"/><stop offset="0.70" stop-color="#a0abf3"/><stop offset="1.00" stop-color="#a3adf4"/></linearGradient>
<radialGradient id="gDark" cx="0" cy="0" r="1" gradientUnits="userSpaceOnUse" gradientTransform="translate(697.5 343.8) rotate(33) scale(30 16)"><stop offset="0" stop-color="#59629a" stop-opacity=".95"/><stop offset=".4" stop-color="#626ca3" stop-opacity=".85"/><stop offset="1" stop-color="#8f9be2" stop-opacity="0"/></radialGradient>
<radialGradient id="gDark2" cx="0" cy="0" r="1" gradientUnits="userSpaceOnUse" gradientTransform="translate(702 349) rotate(33) scale(11 6.5)"><stop offset="0" stop-color="#545d8e"/><stop offset=".5" stop-color="#58618f" stop-opacity=".85"/><stop offset="1" stop-color="#5d6799" stop-opacity="0"/></radialGradient>
<radialGradient id="gHi" cx="0" cy="0" r="1" gradientUnits="userSpaceOnUse" gradientTransform="translate(717.6 362.6) rotate(52) scale(12.5 7.5)"><stop offset="0" stop-color="#fff"/><stop offset=".35" stop-color="#dfe4ff" stop-opacity=".9"/><stop offset="1" stop-color="#aab4fa" stop-opacity="0"/></radialGradient>
<radialGradient id="gFan" cx="0" cy="0" r="1" gradientUnits="userSpaceOnUse" gradientTransform="translate(713 350) scale(38 34)"><stop offset="0" stop-color="#bcc5ff" stop-opacity="1"/><stop offset=".5" stop-color="#abb5f9" stop-opacity=".9"/><stop offset="1" stop-color="#98a3ea" stop-opacity="0"/></radialGradient>
<clipPath id="cDk"><path d="M660 320H713.4V347.3L707.8 353.6L702 355L660 357Z"/></clipPath>
<clipPath id="cFan"><path d="M713.5 347.5L772 356.3L765 405L688 405L676 372Z"/></clipPath>
</defs>
<path d="M717.2 212.8L711.2 211.8L710.8 211.2L708.2 211.2L707.8 210.8L693.2 210.8L692.8 211.2L690.2 211.2L682.2 213.8L674.8 218.2L668.8 224.2L662.8 233.2L656.2 233.2L655.8 233.8L644.2 234.2L643.8 234.8L640.8 234.8L640.2 235.2L632.8 236.2L626.8 238.2L625.2 238.2L615.8 241.8L608.2 245.2L607.2 246.2L602.2 248.8L593.2 255.2L583.8 264.8L578.8 271.2L573.8 280.2L569.8 284.8L565.2 291.2L562.2 297.2L556.2 304.2L551.8 311.2L550.2 314.8L542.2 324.8L538.2 332.2L536.2 334.2L529.8 343.2L526.8 349.2L519.8 357.8L514.8 366.8L510.8 371.2L505.2 379.2L503.2 383.8L496.2 392.2L492.8 397.8L491.2 401.2L484.2 409.8L479.2 418.8L473.8 425.2L466.2 437.8L460.8 453.2L460.2 457.8L459.2 460.8L459.2 464.2L458.8 464.8L458.2 480.2L458.8 480.8L459.2 490.2L459.8 490.8L460.2 496.2L460.8 496.8L460.8 498.8L461.2 499.2L462.2 504.8L468.2 521.8L473.8 533.2L474.8 534.2L474.8 535.2L475.8 536.2L479.8 543.8L489.2 557.2L500.8 570.8L501.2 570.8L509.2 579.2L520.8 589.2L534.2 599.2L552.2 610.2L564.2 616.2L565.2 616.2L571.2 619.2L574.8 620.2L585.2 627.2L592.2 630.8L593.2 630.8L595.8 632.2L600.2 633.8L601.8 633.8L606.2 635.2L608.8 635.2L609.2 635.8L622.2 636.2L622.8 635.8L628.8 635.2L634.2 633.2L652.2 632.8L652.8 632.2L656.8 632.2L657.2 631.8L660.2 631.8L660.8 631.2L663.2 631.2L663.8 630.8L670.8 629.8L685.2 625.2L691.2 622.2L692.2 622.2L701.8 617.2L714.2 608.2L724.8 597.8L730.8 589.8L734.8 582.2L740.2 575.8L747.8 563.2L753.2 556.8L759.8 545.8L761.8 543.8L767.8 535.2L770.2 530.2L776.8 522.2L782.2 512.8L789.8 503.2L794.8 494.2L799.2 489.2L806.8 476.8L810.8 472.2L812.8 468.8L814.2 467.2L818.8 459.2L820.8 457.2L826.8 448.8L829.2 443.8L835.8 435.8L840.8 427.8L844.2 420.8L848.8 408.2L848.8 406.8L850.2 402.2L850.8 397.2L851.2 396.8L851.8 387.2L852.2 386.8L851.8 368.8L848.8 367.8L839.2 366.8L835.8 365.8L833.2 356.8L832.2 355.2L831.8 352.8L828.2 345.2L828.2 344.2L822.2 332.2L816.2 322.2L810.8 314.2L805.8 308.2L804.8 306.2L791.8 291.8L778.2 279.2L767.2 270.8L765.8 259.8L763.2 252.2L758.8 243.8L753.2 236.2L748.8 231.2L744.8 227.8L735.2 220.8L726.8 216.2Z" fill="#8f9be2" stroke="#8f9be2" stroke-width=".6"/>
<g clip-path="url(#cFan)"><ellipse cx="713" cy="350" rx="38" ry="34" fill="url(#gFan)"/></g>
<ellipse cx="697.5" cy="343.8" rx="31" ry="31" fill="url(#gDark)"/><g clip-path="url(#cDk)"><ellipse cx="702" cy="349" rx="12" ry="12" fill="url(#gDark2)"/></g>
<ellipse cx="717.6" cy="362.6" rx="13" ry="13" fill="url(#gHi)"/>
<path d="M580.2 623.2L580.2 624.2L592.2 630.8L593.2 630.8L595.8 632.2L600.2 633.8L601.8 633.8L606.2 635.2L613.2 635.8L613.8 636.2L622.2 636.2L622.8 635.8L626.2 635.8L626.8 635.2L628.8 635.2L632.2 634.2L632.2 633.2L620.2 632.8L619.8 632.2L616.2 632.2L615.8 631.8L613.2 631.8L612.8 631.2L610.2 631.2L609.8 630.8L602.8 629.8ZM575.8 599.2L575.8 600.2L579.2 603.8L585.2 608.8L586.8 609.2L592.2 613.2L593.2 613.2L594.2 614.2L599.2 616.8L608.8 620.2L610.8 620.2L611.2 620.8L612.8 620.8L615.2 621.8L617.8 621.8L618.2 622.2L624.2 622.2L624.8 622.8L626.2 622.8L626.8 622.2L633.8 622.2L634.2 621.8L636.2 621.8L643.2 619.8L648.2 617.2L648.2 616.2L641.8 616.2L641.2 615.8L630.8 615.2L630.2 614.8L627.2 614.8L626.8 614.2L624.2 614.2L623.8 613.8L621.2 613.8L620.8 613.2L613.8 612.2L613.2 611.8L605.8 610.2L603.8 609.2L602.2 609.2L590.2 605.2L586.2 603.2L583.8 602.8L576.8 599.2ZM587.2 581.8L587.2 582.8L593.2 588.2L602.2 594.8L610.8 599.2L611.8 599.2L615.8 601.2L626.2 604.2L633.2 604.8L633.8 605.2L642.2 605.2L642.8 604.8L645.8 604.8L646.2 604.2L648.8 604.2L649.2 603.8L652.8 603.2L660.8 599.8L660.8 598.8L645.8 598.2L645.2 597.8L634.8 596.8L634.2 596.2L627.2 595.2L622.8 593.8L620.8 593.8L608.8 589.8L607.2 589.8L605.8 588.8L597.8 586.2L591.8 583.2ZM599.8 564.8L599.8 565.8L604.8 570.8L610.8 575.2L618.2 579.8L621.2 580.8L622.2 581.8L633.2 585.8L634.8 585.8L637.2 586.8L643.8 587.2L644.2 587.8L654.8 587.8L655.2 587.2L658.8 587.2L661.2 586.2L663.2 586.2L671.8 582.8L671.8 581.8L669.2 581.8L668.8 581.2L656.2 580.8L655.8 580.2L652.2 580.2L651.8 579.8L648.8 579.8L648.2 579.2L645.8 579.2L645.2 578.8L638.2 577.8L618.8 572.2L617.2 571.2L613.2 570.2L611.8 569.2L609.2 568.8L606.8 567.2L603.2 566.2L600.8 564.8ZM611.2 547.2L611.2 548.2L614.8 551.2L615.2 552.2L623.8 558.8L624.8 558.8L626.2 560.2L630.8 562.8L631.8 562.8L632.8 563.8L646.2 568.8L653.8 569.8L654.2 570.2L668.8 570.2L669.2 569.8L671.8 569.8L672.2 569.2L675.8 568.8L683.8 565.2L683.8 564.2L677.8 564.2L677.2 563.8L671.2 563.8L670.8 563.2L662.8 562.8L662.2 562.2L656.8 561.8L656.2 561.2L651.8 560.8L647.2 559.2L645.2 559.2L643.2 558.2L639.8 557.8L627.2 553.8L625.8 552.8L623.2 552.2L618.2 549.8L614.8 548.8L612.2 547.2ZM623.8 530.2L623.8 531.2L624.8 532.8L631.2 538.2L640.2 544.2L641.2 544.2L643.2 545.8L644.2 545.8L645.2 546.8L646.2 546.8L648.8 548.2L655.8 550.8L657.8 550.8L658.2 551.2L659.8 551.2L662.2 552.2L664.8 552.2L665.2 552.8L676.2 553.2L676.8 552.8L681.2 552.8L681.8 552.2L688.2 551.2L695.8 547.8L695.8 546.8L681.8 546.2L681.2 545.8L677.2 545.8L676.8 545.2L673.8 545.2L673.2 544.8L670.8 544.8L670.2 544.2L662.8 543.2L662.2 542.8L652.8 540.8L649.2 539.2L647.8 539.2L638.8 536.2L637.2 535.2L634.8 534.8L627.2 531.2ZM635.2 512.8L635.2 513.8L638.8 517.2L650.2 525.8L657.8 529.8L667.2 533.2L668.8 533.2L673.2 534.8L675.8 534.8L676.2 535.2L679.8 535.2L680.2 535.8L690.2 535.8L690.8 535.2L693.8 535.2L694.2 534.8L696.8 534.8L698.8 533.8L700.2 533.8L707.2 530.8L707.2 529.8L706.2 529.2L692.2 528.8L691.8 528.2L684.8 527.8L684.2 527.2L681.8 527.2L681.2 526.8L678.8 526.8L676.2 525.8L671.8 525.2L665.8 523.2L664.2 523.2L662.2 522.2L660.8 522.2L657.2 520.8L655.8 520.8L654.2 519.8L648.8 518.2L647.2 517.2L638.8 514.2L636.2 512.8ZM646.8 495.2L646.8 496.2L653.8 502.8L662.8 508.8L672.8 513.8L684.2 517.2L686.8 517.2L690.2 518.2L703.2 518.2L703.8 517.8L709.2 517.2L715.2 515.2L719.2 513.2L719.2 512.2L702.8 511.2L702.2 510.8L698.8 510.8L698.2 510.2L695.8 510.2L695.2 509.8L692.8 509.8L692.2 509.2L685.2 508.2L664.2 502.2L662.8 501.2L660.2 500.8L658.8 499.8L652.8 497.8L649.2 495.8ZM659.2 478.2L659.2 479.2L663.8 483.8L671.8 489.8L684.2 496.2L693.2 499.2L695.2 499.2L697.8 500.2L700.8 500.2L701.2 500.8L706.8 500.8L707.2 501.2L716.8 500.8L717.2 500.2L719.8 500.2L721.8 499.2L724.8 498.8L731.2 495.8L731.2 494.8L723.2 494.8L722.8 494.2L713.2 493.8L712.8 493.2L709.8 493.2L709.2 492.8L706.8 492.8L706.2 492.2L703.8 492.2L703.2 491.8L696.2 490.8L675.8 484.8L674.2 483.8L670.2 482.8L667.8 481.2L665.2 480.8L661.8 478.8ZM670.8 460.8L670.8 461.8L674.2 465.2L679.8 469.8L686.8 474.2L698.2 479.8L699.8 479.8L701.2 480.8L702.8 480.8L706.8 482.2L708.8 482.2L711.8 483.2L716.2 483.2L716.8 483.8L725.2 483.8L725.8 483.2L729.8 483.2L730.2 482.8L735.8 481.8L743.8 478.2L743.8 477.2L727.8 476.8L727.2 476.2L723.8 476.2L723.2 475.8L717.2 475.2L716.8 474.8L709.8 473.8L709.2 473.2L699.8 471.2L697.8 470.2L696.2 470.2L685.8 466.8L681.8 464.8L679.2 464.2L673.2 461.2ZM663.8 231.8L644.8 259.8L644.8 260.8L642.8 264.8L642.2 268.8L641.8 269.2L641.8 280.2L642.2 280.8L642.2 283.2L642.8 283.8L642.8 286.2L643.2 286.8L643.2 289.2L643.8 289.8L645.8 304.2L646.8 307.2L647.2 312.8L647.8 313.2L648.8 320.8L649.8 323.8L649.8 326.2L650.2 326.8L650.2 328.8L650.8 329.2L650.8 331.2L651.2 331.8L651.2 333.8L651.8 334.2L651.8 336.2L652.2 336.8L652.2 338.8L652.8 339.2L652.8 341.2L653.2 341.8L653.2 343.8L653.8 344.2L653.8 346.2L654.2 346.8L654.2 348.8L654.8 349.2L654.8 351.2L655.2 351.8L655.2 353.8L655.8 354.2L655.8 356.2L656.8 359.2L656.8 361.8L657.8 364.2L657.8 366.8L658.2 367.2L658.2 369.2L658.8 369.8L658.8 371.8L659.8 374.8L659.8 377.2L660.2 377.8L660.2 379.8L661.2 382.8L661.2 385.2L661.8 385.8L662.2 391.2L663.2 394.2L665.2 408.8L666.2 411.8L666.2 414.8L666.8 415.2L666.8 417.2L668.2 422.2L673.2 432.8L677.8 439.2L682.2 444.2L688.2 449.8L698.2 456.8L711.2 462.8L715.8 464.2L722.2 465.2L722.8 465.8L726.2 465.8L726.8 466.2L738.8 466.2L739.2 465.8L746.8 464.8L748.2 463.8L750.8 463.2L758.2 459.2L764.2 453.8L777.8 434.2L777.8 433.2L776.8 433.2L773.2 436.2L766.8 439.8L760.2 441.8L753.2 442.2L752.8 442.8L747.2 442.8L746.8 442.2L742.2 442.2L741.8 441.8L739.2 441.8L738.8 441.2L734.8 440.8L724.8 437.2L717.8 433.8L708.8 427.8L702.2 422.2L696.2 415.8L689.2 405.2L686.2 398.8L684.2 391.8L684.2 389.8L683.8 389.2L683.8 386.2L682.8 382.8L681.8 372.8L681.2 372.2L680.2 362.8L679.8 362.2L679.2 356.2L678.8 355.8L678.8 352.8L677.8 349.2L677.8 346.2L677.2 345.8L677.2 342.8L676.8 342.2L676.8 339.2L675.8 335.8L674.8 325.8L673.8 322.2L672.8 312.2L671.8 308.8L671.8 305.8L671.2 305.2L669.8 292.2L668.8 288.8L667.8 278.8L666.8 275.2L665.2 261.8L664.2 258.2L664.2 255.2L663.8 254.8L663.8 251.8L663.2 251.2L663.2 248.2L662.8 247.8L662.8 240.8L663.2 240.2L663.8 235.2L664.8 233.2L664.8 231.8Z" fill="url(#gOut)"/>
<path d="M682.2 213.8L674.8 218.2L668.8 224.2L668.8 225.8L665.8 230.8L664.2 235.2L663.8 240.2L663.2 240.8L663.2 244.8L669.8 243.8L670.2 243.2L673.2 243.2L673.8 242.8L674.8 243.2L676.2 242.8L680.2 242.8L680.8 243.2L687.8 243.8L688.2 244.2L693.8 245.2L700.8 248.2L701.8 248.2L711.2 253.2L720.2 259.8L731.2 271.2L737.8 281.2L741.2 289.8L741.2 291.2L742.8 295.8L742.8 297.8L743.2 298.2L744.2 309.2L744.8 309.8L745.8 320.8L746.2 321.2L746.2 325.2L746.8 325.8L746.8 328.8L747.2 329.2L747.8 337.2L748.2 337.8L749.2 351.2L749.8 352.2L751.2 352.8L760.8 353.8L763.8 354.8L763.8 359.2L764.2 359.8L765.2 373.8L765.8 374.2L766.2 382.2L766.8 382.8L766.8 387.2L767.2 387.8L767.2 391.2L767.8 391.8L767.8 395.2L768.2 395.8L768.2 399.2L768.8 399.8L768.8 403.2L769.2 403.8L769.2 407.8L769.8 408.2L770.8 419.2L771.2 419.8L771.8 426.8L772.2 427.2L772.2 434.2L771.8 435.8L773.2 435.8L783.2 426.2L784.8 423.2L787.2 414.8L787.2 402.8L786.8 402.2L786.8 399.2L785.8 395.8L785.8 392.8L785.2 392.2L785.2 389.2L784.2 385.8L783.8 379.2L782.8 375.8L782.8 372.8L782.2 372.2L782.2 369.2L781.8 368.8L781.8 365.8L780.8 362.2L779.8 352.2L778.8 348.8L777.8 338.8L776.8 335.2L776.2 328.8L775.2 325.2L774.8 318.8L773.8 315.2L773.8 312.2L773.2 311.8L773.2 308.8L772.8 308.2L772.8 305.2L771.8 301.8L770.8 291.8L769.8 288.2L768.8 278.2L767.8 274.8L767.2 268.2L766.8 267.8L765.8 259.8L763.2 252.2L756.8 240.8L748.8 231.2L738.2 222.8L726.8 216.2L717.2 212.8L711.2 211.8L710.8 211.2L708.2 211.2L707.8 210.8L693.2 210.8L692.8 211.2L690.2 211.2Z" fill="url(#gIn)"/>
<path d="M742.9 298.6L749.5 352.7M763.4 355.1L767.1 389.5L771.9 426.9L772.1 432.1L771.6 437.2M767.8 448.2L764.6 453.0L760.5 457.1L755.7 460.6L750.0 463.4L743.9 465.3L737.1 466.4L730.2 466.5L722.8 465.8L715.7 464.2L708.3 461.7L701.4 458.5L694.5 454.4L688.4 449.9L682.6 444.6L677.5 438.8L673.4 433.0L669.2 424.7L666.6 416.3L659.5 375.5L648.0 316.6L641.8 280.2L641.5 273.3L642.5 266.5L644.8 260.3L648.4 254.8M648.8 254.4L649.4 253.8M662.6 245.4L668.4 243.9L674.4 243.2L680.7 243.3L687.1 244.1L693.7 245.7L700.2 248.0L706.6 251.0L712.8 254.6L718.6 258.9L724.0 263.6L728.8 268.8L733.1 274.4L736.7 280.2L739.6 286.2L741.6 292.2L742.9 298.3M746.0 476.6L741.9 479.0L737.8 480.9L733.1 482.4L728.0 483.4L722.8 483.9L717.3 483.8L711.7 483.2L706.1 482.1L695.3 478.6L684.7 473.1L675.1 466.0L666.9 457.7M733.9 494.1L730.1 496.4L725.7 498.3L720.9 499.8L715.8 500.8L710.6 501.2L705.1 501.1L699.5 500.5L693.9 499.4L683.1 495.8L672.5 490.2L662.9 483.1L654.8 474.7M721.8 511.6L718.0 513.9L713.5 515.8L709.1 517.2L704.0 518.1L693.6 518.5L688.1 517.9L682.4 516.8L671.7 513.3L661.0 507.8L651.7 501.0L643.5 492.7M709.7 529.1L705.9 531.4L701.4 533.3L696.9 534.6L691.8 535.5L681.4 535.8L675.9 535.2L670.2 534.1L659.5 530.5L648.9 524.9L639.6 518.1L631.4 509.7M698.4 546.1L694.3 548.6L690.2 550.4L685.4 551.9L680.3 552.8L670.0 553.2L664.4 552.6L658.8 551.5L648.0 548.0L637.4 542.5L627.7 535.4L619.5 527.1M686.3 563.7L682.5 565.9L678.0 567.9L673.6 569.2L668.5 570.2L658.1 570.5L652.6 570.0L646.9 568.9L636.2 565.3L625.5 559.8L616.2 553.0L608.0 544.7M674.5 581.0L670.7 583.3L666.2 585.2L661.4 586.6L656.3 587.6L645.9 587.9L640.4 587.3L634.7 586.1L624.0 582.5L613.4 577.0L604.1 570.1L595.9 561.8M663.2 598.0L659.4 600.3L655.0 602.3L650.2 603.8L645.2 604.8L639.9 605.3L634.5 605.2L628.9 604.7L623.3 603.6L612.5 600.0L601.9 594.5L592.2 587.5L584.0 579.1M651.1 615.5L647.0 618.0L642.8 619.8L638.1 621.3L633.0 622.2L622.6 622.6L617.1 622.0L611.4 620.9L600.7 617.4L590.0 611.9L580.7 605.1L572.5 596.8" fill="none" stroke="#0f63ee" stroke-width="1" shape-rendering="crispEdges"/>
<path d="M851.6 368.4L852.3 377.4L852.2 385.8L851.5 394.1L850.2 402.2L848.2 410.0L845.4 417.9L842.1 425.1L838.2 431.9L833.5 438.6L828.4 444.6L822.8 450.2L816.6 455.3L809.9 459.9L802.8 464.0L795.2 467.6L787.0 470.7L778.6 473.2L770.0 475.0L760.7 476.3L751.5 477.0L742.1 477.1L732.6 476.6L722.9 475.5L712.8 473.8L702.7 471.4L693.0 468.6L683.4 465.2L673.5 461.2L663.8 456.6L654.6 451.6L645.4 446.0L636.8 440.2L627.9 433.4L619.7 426.5L612.0 419.2L604.5 411.4L597.6 403.1L591.4 395.0L585.6 386.3L580.7 377.8L576.2 368.8L572.5 359.7L569.6 351.0L567.2 341.9L565.7 333.3L564.9 324.4L564.8 315.7L565.5 307.3L566.9 299.1L569.0 291.4L571.9 283.9L575.5 276.7L579.8 270.0L584.7 263.7L590.4 258.0L596.6 252.8L603.4 248.1L610.8 244.1L618.7 240.6L626.7 237.9L635.4 235.8L644.5 234.3L653.9 233.4L663.2 233.3M767.3 270.8L779.8 280.8L791.1 291.4L801.6 302.7L810.9 314.7L819.1 327.1L826.1 340.0L831.8 353.1L836.1 366.3M831.2 440.5L825.4 450.8L818.0 460.4L809.3 469.0L799.7 476.3L788.7 482.6L777.0 487.4L764.1 491.2L750.9 493.5L737.1 494.5L722.6 494.1L707.7 492.4L693.1 489.4L678.5 485.1L663.8 479.5L649.4 472.6L635.6 464.6L622.4 455.6L610.0 445.7L598.5 434.9L587.9 423.1L578.7 411.1L570.6 398.3L564.0 385.1L558.9 372.2L555.3 358.9L553.4 346.2L552.9 333.4L554.1 321.0L557.0 309.3L561.4 298.3L567.1 288.5L574.5 279.4M819.2 458.2L813.2 468.7L805.9 478.0L797.4 486.4L787.5 493.8L776.8 499.9L764.8 504.9L752.3 508.5L738.7 510.9L724.9 511.8L710.3 511.4L695.8 509.7L680.9 506.6L666.3 502.3L651.6 496.6L637.2 489.8L623.3 481.8L610.2 472.7L597.8 462.7L586.4 451.9L575.8 440.2L566.6 428.1L558.6 415.3L552.1 402.5L547.0 389.2L543.4 375.9L541.5 363.2L541.1 350.4L542.4 338.1L545.1 326.6L549.6 315.7L555.5 305.6L562.9 296.5M807.4 475.6L801.5 485.8L794.1 495.4L785.3 503.9L775.7 511.2L764.6 517.4L752.9 522.3L740.4 525.9L726.8 528.2L713.0 529.2L698.4 528.8L683.9 527.0L669.0 523.9L654.4 519.6L639.7 514.0L625.3 507.1L611.5 499.1L598.3 490.0L585.9 480.1L574.2 469.0L563.9 457.5L554.8 445.4L546.7 432.6L540.3 419.8L535.1 406.5L531.6 393.6L529.6 380.5L529.3 368.0L530.5 355.7L533.3 344.0L537.7 333.0L543.7 322.9L550.8 314.0M795.7 492.7L789.6 503.2L782.4 512.5L774.0 520.9L764.1 528.4L753.3 534.5L741.4 539.5L728.9 543.1L715.3 545.5L701.1 546.5L686.9 546.1L672.4 544.4L657.5 541.4L642.9 537.1L628.2 531.4L613.8 524.6L599.9 516.6L586.7 507.6L574.4 497.6L562.9 486.9L552.3 475.1L542.9 462.7L535.0 450.2L528.6 437.4L523.4 424.1L519.8 410.9L517.8 398.1L517.4 385.6L518.6 373.3L521.4 361.5L525.8 350.6L531.5 340.7L538.8 331.6M783.3 511.1L777.3 521.3L770.0 530.6L761.4 538.9L751.4 546.3L740.3 552.4L728.6 557.2L716.0 560.7L702.4 563.0L688.6 563.9L674.0 563.4L659.1 561.5L644.5 558.4L629.9 554.0L615.2 548.3L600.9 541.4L587.1 533.3L573.9 524.2L561.6 514.2L550.2 503.3L539.7 491.5L530.6 479.4L522.8 466.9L516.4 454.1L511.3 440.8L507.9 427.9L505.9 414.8L505.6 402.3L506.9 390.0L509.7 378.6L514.1 367.6L520.0 357.5L527.4 348.5M771.8 527.7L765.9 537.9L758.5 547.5L750.0 555.9L740.1 563.3L729.0 569.5L717.3 574.4L704.8 577.9L691.2 580.3L677.0 581.2L662.8 580.8L648.3 579.1L633.4 575.9L618.4 571.5L604.1 566.0L589.7 559.1L575.9 551.1L562.7 542.0L550.3 532.0L538.9 521.2L528.3 509.4L519.0 497.0L511.2 484.5L504.7 471.7L499.6 458.4L496.1 445.5L494.1 432.4L493.8 419.6L495.0 407.6L497.8 395.9L502.3 384.9L508.0 375.1L515.4 366.0M760.2 544.5L754.2 555.1L747.0 564.4L738.6 572.8L728.7 580.3L718.0 586.4L706.1 591.5L693.2 595.2L679.7 597.6L665.9 598.5L651.3 598.2L636.5 596.4L621.5 593.3L606.9 589.0L592.2 583.3L577.8 576.4L564.0 568.4L550.8 559.3L538.2 549.1L526.8 538.3L516.2 526.4L506.9 514.0L499.1 501.5L492.7 488.7L487.6 475.4L484.2 462.5L482.3 449.4L482.0 436.6L483.3 424.3L486.2 412.7L490.6 402.0L496.6 392.0L504.0 382.9M748.3 562.2L742.2 572.7L735.0 582.0L726.5 590.4L716.6 597.8L705.6 604.1L693.9 609.0L681.4 612.6L667.8 614.9L653.7 615.9L639.4 615.5L624.6 613.7L609.6 610.6L595.1 606.3L580.3 600.6L566.0 593.7L552.1 585.7L539.0 576.6L526.6 566.7L515.2 555.9L504.6 544.1L495.5 532.0L487.5 519.1L481.0 506.3L475.9 493.1L472.4 480.1L470.5 467.0L470.1 454.3L471.4 442.0L474.3 430.3L478.8 419.3L484.7 409.3L492.0 400.4M736.7 579.0L730.7 589.6L723.5 599.0L714.9 607.6L705.3 614.9L694.6 621.0L682.7 626.1L670.2 629.8L656.6 632.2L642.9 633.2L628.3 632.9L613.5 631.2L598.5 628.1L583.6 623.8L569.2 618.3L554.8 611.4L540.9 603.5L527.7 594.4L515.0 584.2L503.6 573.5L493.0 561.7L483.8 549.6L475.8 536.8L469.3 524.0L464.2 510.7L460.7 497.8L458.7 484.7L458.3 471.9L459.5 459.6L462.4 447.9L466.7 437.2L472.6 427.1L480.0 418.0M714.9 347.5L713.2 350.9L710.4 353.5L707.0 354.9L702.1 355.2L701.8 355.5M714.9 347.5L763.8 355.0M780.3 357.5L851.5 368.4M766.4 264.2L787.3 405.0L787.4 411.1L786.6 416.9L784.9 422.3L782.3 427.3L778.1 432.3L773.0 436.4L766.9 439.5L759.8 441.6L752.0 442.6L744.1 442.3L736.0 440.9L727.5 438.2L719.3 434.5L711.8 429.9L704.8 424.5L698.4 418.1L693.2 411.5L688.8 404.1L685.7 396.5L683.9 389.2L663.0 248.1L662.8 242.0L663.7 236.2L665.4 230.8L668.0 225.8L672.4 220.6L677.6 216.6L684.0 213.4L690.9 211.4L698.7 210.5L706.6 210.9L714.7 212.3L723.1 215.0L731.4 218.9L738.9 223.5L746.0 229.2L752.1 235.3L757.3 242.0L761.5 249.1L764.6 256.6L766.3 263.9M635.1 633.1L628.6 635.2L621.2 636.2L613.4 636.1L605.3 634.9L597.2 632.6L589.2 629.3L581.6 624.9L574.8 620.0M766.4 264.2L742.7 298.9M787.0 403.0L771.4 425.8M683.9 388.9L666.0 415.2M663.2 250.1L641.5 281.9" fill="none" stroke="#000" stroke-width="1" shape-rendering="crispEdges"/>
</svg>
<!--MODEL-END-->
<div class="a" style="left:625px;top:157px;width:297px;height:32px;background:#f9f9f9;border:1px solid #a9a9a9;box-sizing:border-box"></div>
<svg style="left:625px;top:157px" width="297" height="32" viewBox="625 157 297 32">
 <defs>
  <linearGradient id="tlens" x1="0" y1="0" x2="1" y2="1"><stop offset="0" stop-color="#fff"/><stop offset="1" stop-color="#d4eefa"/></linearGradient>
  <radialGradient id="tsph" cx="35%" cy="30%" r="75%"><stop offset="0" stop-color="#fff"/><stop offset=".6" stop-color="#dcdcdc"/><stop offset="1" stop-color="#8e8e8e"/></radialGradient>
  <linearGradient id="tcub" x1="0" y1="0" x2="1" y2="1"><stop offset="0" stop-color="#fff"/><stop offset="1" stop-color="#a9a9a9"/></linearGradient>
  <linearGradient id="trep" x1="0" y1="0" x2="1" y2="1"><stop offset="0" stop-color="#b7e0ee"/><stop offset="1" stop-color="#3f9fc4"/></linearGradient>
 </defs>
 <!-- 1 zoom fit -->
 <rect x="633.5" y="165" width="14" height="13.5" fill="#fbfbfb" stroke="#bcbcbc" stroke-width="1"/><path d="M633 165H648" stroke="#a6a6a6" stroke-width="1.4"/>
 <path d="M643.5 175L648 179.5" stroke="#9b9b9b" stroke-width="2.6" stroke-linecap="round"/><path d="M643.5 175L648 179.5" stroke="#e4e4e4" stroke-width="1" stroke-linecap="round"/>
 <circle cx="640.4" cy="171.8" r="4.4" fill="url(#tlens)" stroke="#3b95c4" stroke-width="1.1"/>
 <!-- 2 zoom in -->
 <path d="M668.5 174L674 179" stroke="#9b9b9b" stroke-width="2.6" stroke-linecap="round"/><path d="M668.5 174L674 179" stroke="#e8e8e8" stroke-width="1" stroke-linecap="round"/>
 <circle cx="664.9" cy="170" r="5.3" fill="url(#tlens)" stroke="#3b95c4" stroke-width="1.1"/><path d="M661.7 170H668.1M664.9 166.8V173.2" stroke="#18598a" stroke-width="1.8"/>
 <!-- 3 zoom out -->
 <path d="M694.7 174L700.2 179" stroke="#9b9b9b" stroke-width="2.6" stroke-linecap="round"/><path d="M694.7 174L700.2 179" stroke="#e8e8e8" stroke-width="1" stroke-linecap="round"/>
 <circle cx="691.1" cy="170" r="5.3" fill="url(#tlens)" stroke="#3b95c4" stroke-width="1.1"/><path d="M687.9 170H694.3" stroke="#18598a" stroke-width="1.8"/>
 <!-- 4 repaint -->
 <rect x="711.5" y="165" width="15.3" height="14" fill="#fdfdfd" stroke="#a9a9a9" stroke-width="1"/>
 <path d="M712 167C719 166.5 724 169 726.3 173V178.5H717.5L726.3 170.5V166H712Z" fill="url(#trep)"/>
 <path d="M711 165.3H727.3" stroke="#9c9c9c" stroke-width="1.6"/>
 <path d="M725.8 170.5L716.5 178" stroke="#154e73" stroke-width="1.6"/><path d="M714.5 178.6H719" stroke="#154e73" stroke-width="1.2"/>
 <!-- 5 shading -->
 <path d="M743 167.5L746.5 164.5H753V171L750 174.5H743Z" fill="url(#tcub)"/><path d="M743 167.5H750V174.5" fill="none" stroke="#f4f4f4" stroke-width=".6"/>
 <circle cx="742.2" cy="174.8" r="4.8" fill="url(#tsph)"/>
 <path d="M756.3 179.3V182.3H753.3Z" fill="#555"/>
 <!-- 6 box -->
 <path d="M764.5 168.5L768.5 164.5H780V175.5L776 179.5H764.5Z" fill="#8fcbe2" stroke="#176b9b" stroke-width="1.3" stroke-linejoin="round"/>
 <rect x="764.5" y="168.5" width="11.5" height="11" fill="#fff" stroke="#176b9b" stroke-width="1.4"/><path d="M776 168.5L780 164.5" stroke="#176b9b" stroke-width="1.2"/>
 <path d="M783.3 179.3V182.3H780.3Z" fill="#555"/>
 <!-- 7 saved views -->
 <path d="M791.3 168L794.8 164.5H806V175.5L802.5 179H791.3Z" fill="#bfe6f7" stroke="#9ed3ec" stroke-width=".8"/>
 <path d="M802.5 168L806 164.5V175.5L802.5 179Z" fill="#7dbfe0"/>
 <rect x="791.3" y="168" width="11.2" height="11" fill="#fbfeff" stroke="#9ed3ec" stroke-width=".8"/>
 <rect x="799.5" y="171.5" width="7.5" height="8.5" fill="#f4f4f4" stroke="#9a9a9a" stroke-width=".8"/><path d="M801 174H802M803 174H805.7M801 176H802M803 176H805.7M801 178H802M803 178H805.7" stroke="#555" stroke-width=".8"/>
 <path d="M810.3 179.3V182.3H807.3Z" fill="#555"/>
 <!-- 8 table + camera -->
 <rect x="818.3" y="164.8" width="13.2" height="14" fill="#fcfcfc" stroke="#b4b4b4" stroke-width=".9"/>
 <path d="M818.3 168H831.5M818.3 171.3H831.5M818.3 174.6H831.5M822 164.8V178.8" stroke="#bdbdbd" stroke-width=".8"/><path d="M818 165H832" stroke="#a5a5a5" stroke-width="1.2"/><path d="M818.3 178.6H824" stroke="#5aa5cf" stroke-width="1"/>
 <path d="M823.5 174.3H826L827 172.8H831L832 174.3H834.3V180.3H823.5Z" fill="#4a4a4a"/><circle cx="829" cy="177.3" r="2.3" fill="#2b2b2b" stroke="#9a9a9a" stroke-width=".8"/>
 <!-- 9 datum display -->
 <g stroke="#7a5a1c" stroke-width="1.3" fill="none"><path d="M844 165L848 169M848 165L844 169"/><path d="M854 164.5L847.5 179.5" stroke-dasharray="3.2 2.2"/><path d="M856.5 169L855 179.5M851.5 171.5L859.5 178M859.5 171.5L851.5 178" stroke-width="1.2"/></g>
 <path d="M863.3 179.3V182.3H860.3Z" fill="#555"/>
 <!-- 10 annotation display -->
 <rect x="871.3" y="164.8" width="9.6" height="5.6" fill="#fdf3cf" stroke="#9c9c9c" stroke-width=".9"/>
 <path d="M881 167.5H886.5M886.3 167.5V171" stroke="#333" stroke-width="1.1" fill="none"/><path d="M883.2 170.2L887.6 169.8L885 174Z" fill="#333"/><path d="M886 172L882.5 174.5" stroke="#333" stroke-width="1"/>
 <path d="M877.8 177.6C880 174.6 885 174.6 887.3 177.6C885 180.6 880 180.6 877.8 177.6Z" fill="#fff" stroke="#333" stroke-width="1.1"/><circle cx="882.5" cy="177.6" r="1.5" fill="#333"/>
 <!-- 11 tree -->
 <path d="M900.5 167L905.3 172.4L900.5 177.5M905.3 172.4H910.5" stroke="#333" stroke-width="1.1" fill="none"/>
 <circle cx="900.5" cy="167" r="2.5" fill="#7fbf7a" stroke="#5a9a58" stroke-width=".6"/><circle cx="910.7" cy="172.4" r="2.5" fill="#ee8a8a" stroke="#c96a6a" stroke-width=".6"/><circle cx="900.5" cy="177.6" r="2.5" fill="#4fa3cf" stroke="#3a86b0" stroke-width=".6"/>
</svg>


<!-- ===== status bar ===== -->
<div class="a" style="left:0;top:666px;width:1349px;height:33px;background:#eff0f2"></div>
<div class="a" style="left:0;top:666px;width:1349px;height:2px;background:#909090"></div>
<div class="a" style="left:0;top:668px;width:1349px;height:1px;background:#dcdddf"></div>
<div class="a" style="left:-1px;top:673px;width:21px;height:21px;background:#dddee0;border:1px solid #c2c2c2;box-sizing:content-box"></div>
<svg style="left:6px;top:676px" width="14" height="17" viewBox="0 0 14 17"><path d="M1.2 0.8h3.3v3.3h-3.3zM1.2 6.4h3.3v3.3h-3.3zM1.2 12.2h3.3v3.3h-3.3zM8.6 6.4h3.3v3.3h-3.3z" fill="#fff" stroke="#2e2e2e" stroke-width="1.1"/><path d="M2.85 4.1V6.4M2.85 9.7V12.2M4.5 8H8.6" fill="none" stroke="#2e2e2e" stroke-width="1.1"/></svg>
<svg style="left:27px;top:675px" width="19" height="18" viewBox="0 0 19 18">
 <defs><radialGradient id="ggl" cx="35%" cy="30%" r="75%"><stop offset="0" stop-color="#9fdcff"/><stop offset=".6" stop-color="#2f8fe0"/><stop offset="1" stop-color="#1660b0"/></radialGradient></defs>
 <circle cx="9.5" cy="9" r="6.6" fill="url(#ggl)"/>
 <path d="M6 5C8 4 9 6 8 7.5C7 9 5.5 8 5 9.5C4.5 11 6 12 7 13M11 5.5C12.5 6 13 8 12 9.5C11 11 12 12.5 13 12" stroke="#bfe6ff" stroke-width="1.2" fill="none" opacity=".8"/>
 <ellipse cx="9.5" cy="9" rx="9.3" ry="4" fill="none" stroke="#555" stroke-width="1" transform="rotate(-42 9.5 9)"/>
 <path d="M4.2 13.6A6.6 6.6 0 0 0 15.5 6.2" fill="none" stroke="#2f8fe0" stroke-width="0"/>
</svg>
<svg style="left:54px;top:676px" width="17" height="16" viewBox="0 0 17 16"><defs><linearGradient id="gsq" x1="0" y1="0" x2="0" y2="1"><stop offset="0" stop-color="#fff"/><stop offset="1" stop-color="#c9dfec"/></linearGradient></defs><rect x="0.6" y="0.6" width="15.2" height="14.6" rx="1" fill="url(#gsq)" stroke="#2c7eae" stroke-width="1.1"/></svg>
<div class="a" style="left:82px;top:673px;width:1px;height:22px;background:#b3b3b3"></div>
<div class="a" style="left:89px;top:680px;width:5px;height:5px;border-radius:50%;background:#1b5e84"></div>
<span class="t" style="left:99px;top:674px;font-size:11px;color:#333">基准平面将不显示。</span>

<div class="a" style="left:1019px;top:670px;width:1px;height:25px;background:#b8b8b8"></div>
<div class="a" style="left:1066px;top:670px;width:1px;height:25px;background:#b8b8b8"></div>
<div class="a" style="left:1022px;top:670px;width:42px;height:24px;background:#fafafa;border:1px solid #cbcbcb;box-sizing:border-box"></div>
<div class="a" style="left:1049px;top:671px;width:1px;height:22px;background:#cbcbcb"></div>
<svg style="left:1027px;top:674px" width="18" height="17" viewBox="0 0 18 17">
 <defs><linearGradient id="gbn" x1="0" x2="1"><stop offset="0" stop-color="#9a9a9a"/><stop offset=".5" stop-color="#6a6a6a"/><stop offset="1" stop-color="#1c1c1c"/></linearGradient></defs>
 <rect x="3.5" y="1" width="3.6" height="3" fill="#444"/><rect x="10.6" y="1" width="3.6" height="3" fill="#333"/>
 <path d="M3 3.5H7.5L8 15.5H0.8C0.8 10 1.5 6 3 3.5Z" fill="url(#gbn)"/>
 <path d="M10.2 3.5H14.7C16.2 6 16.9 10 16.9 15.5H9.7Z" fill="url(#gbn)"/>
 <rect x="7.2" y="5" width="3.4" height="5" fill="#555"/>
 <rect x="0.8" y="14.5" width="7.2" height="1.2" fill="#222"/><rect x="9.7" y="14.5" width="7.2" height="1.2" fill="#111"/>
</svg>
<i class="ar" style="left:1053px;top:680px"></i>

<div class="a" style="left:1164px;top:670px;width:177px;height:24px;background:#fbfbfb;border:1px solid #c2c2c2;box-sizing:border-box"></div>
<div class="a" style="left:1325px;top:671px;width:1px;height:22px;background:#c8c8c8"></div>
<span class="t" style="left:1172px;top:673px;color:#222">几何</span>
<i class="ar" style="left:1329px;top:680px"></i>
<span class="t" style="left:1234px;top:672px;font-size:14px;line-height:20px;color:rgba(135,135,135,.75)">CSDN @松傻誰</span>


</body></html>
